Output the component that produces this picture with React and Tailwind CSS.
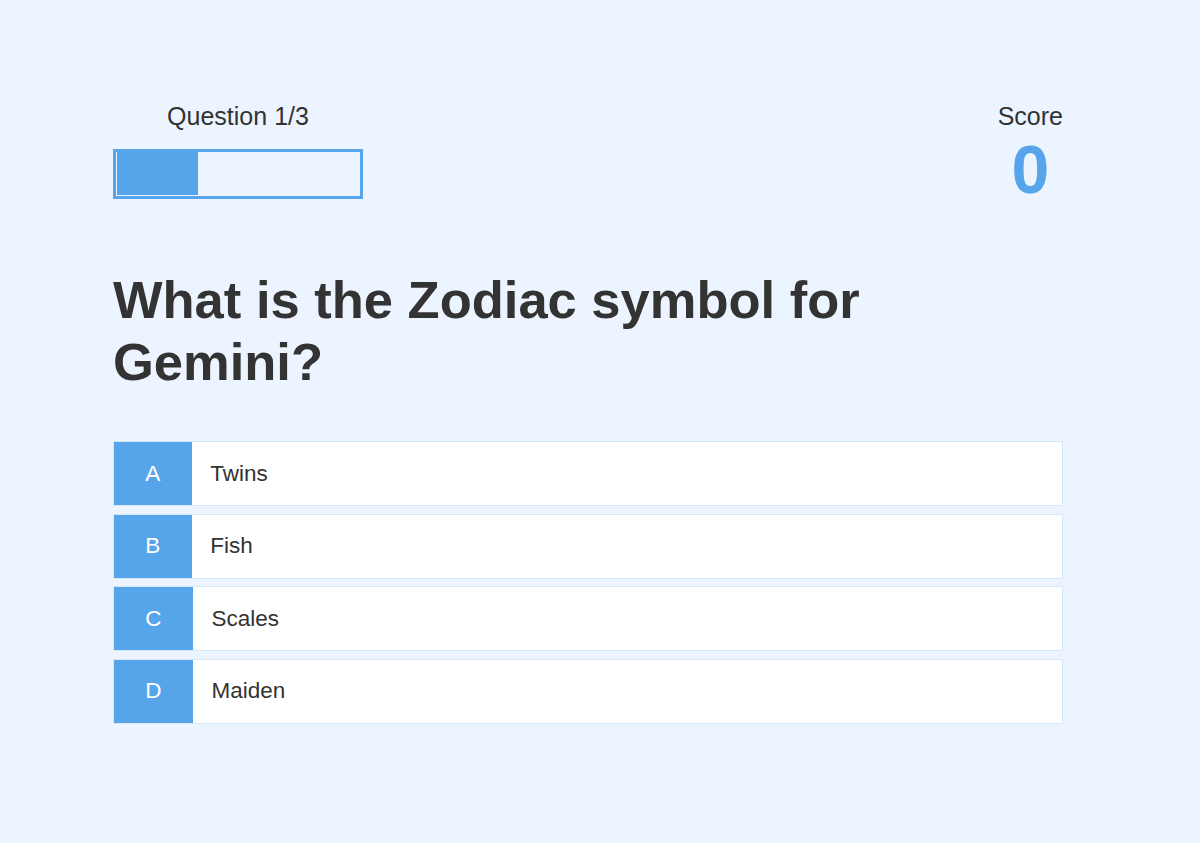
import React from 'react';

const choices = [
  { prefix: 'A', text: 'Twins' },
  { prefix: 'B', text: 'Fish' },
  { prefix: 'C', text: 'Scales' },
  { prefix: 'D', text: 'Maiden' },
];

const ChoiceRow = ({ prefix, text }) => (
  <div className="flex h-[65px] w-full border border-[#56a5eb]/25 bg-white">
    <div className="flex items-center bg-[#56a5eb] px-[31.25px] text-white">{prefix}</div>
    <div className="flex items-center pl-[18.75px] text-[#333]">{text}</div>
  </div>
);

export default function App() {
  const question = 1;
  const total = 3;
  const progress = (question / total) * 100;

  return (
    <div
      className="min-h-screen w-full bg-[#ecf5ff] text-[22.5px] text-[#333]"
      style={{ fontFamily: '"Liberation Sans", Arial, sans-serif' }}
    >
      <div className="ml-[113px] w-[950px] pt-[102px]">
        {/* HUD */}
        <div className="flex items-start justify-between">
          <div className="flex w-[250px] flex-col items-center">
            <p className="text-[25px] leading-[29px]">
              Question {question}/{total}
            </p>
            <div className="mt-[18px] h-[50px] w-[250px] border-[3px] border-[#56a5eb] p-[1px] pt-0">
              <div className="h-full bg-[#56a5eb]" style={{ width: `${progress}%` }} />
            </div>
          </div>
          <div className="flex flex-col items-center">
            <p className="text-[25px] leading-[29px]">Score</p>
            <p className="text-[68px] font-bold leading-[76px] text-[#56a5eb]">0</p>
          </div>
        </div>

        {/* Question */}
        <h2 className="mt-[61.5px] text-[52.5px] font-bold leading-[62px] text-[#333]">
          What is the Zodiac symbol for Gemini?
        </h2>

        {/* Choices */}
        <div className="mt-[48.5px] flex flex-col gap-[7.5px]">
          {choices.map((c) => (
            <ChoiceRow key={c.prefix} {...c} />
          ))}
        </div>
      </div>
    </div>
  );
}
